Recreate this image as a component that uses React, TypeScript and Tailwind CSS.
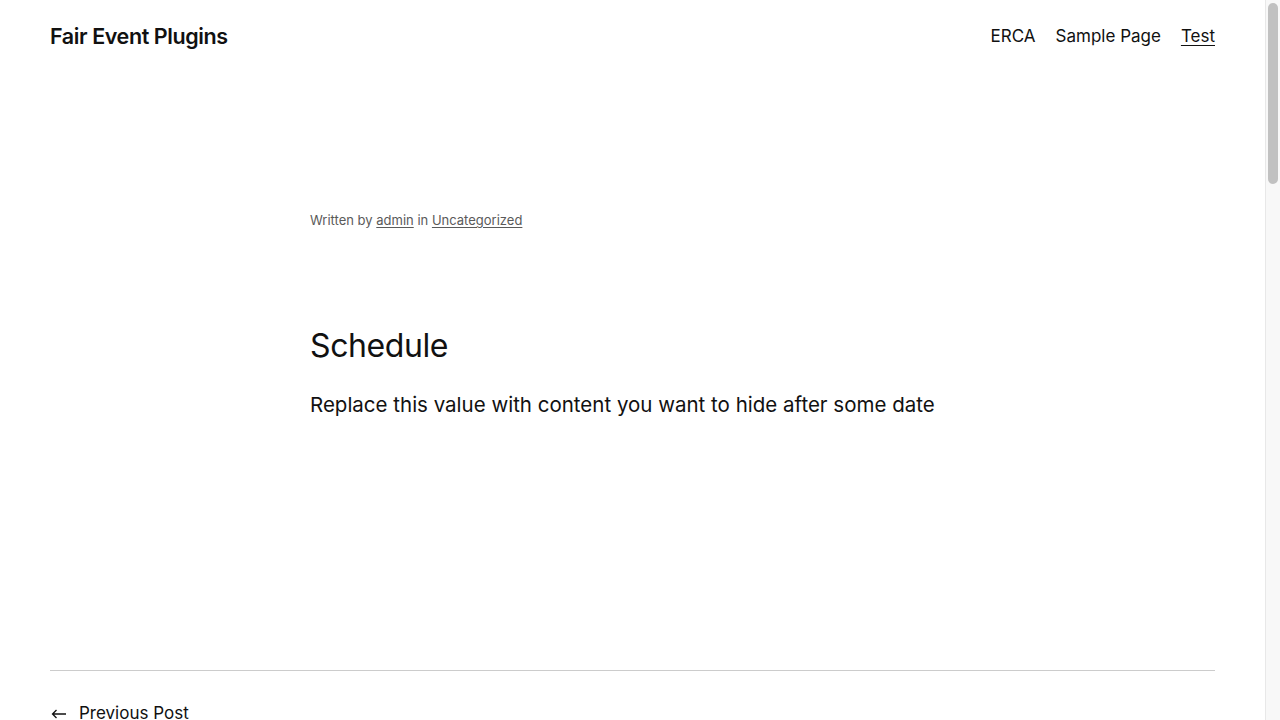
import React from 'react';

const font = { fontFamily: 'Inter, "Noto Sans", sans-serif' };

const ScrollBar = () => (
    <div className="w-[15px] shrink-0 border-l border-[#e8e8e8] bg-[#f8f8f8] px-[2px] pt-[3px]">
        <div className="h-[181px] rounded-full bg-[#c1c1c1]" />
    </div>
);

const App = () => {
    return (
        <div className="flex h-[720px] overflow-hidden bg-white text-[#111111]" style={font}>
            <div className="flex-1">
                <header className="flex items-center justify-between px-[50px] pt-[22px]">
                    <a href="#" className="text-[21.5px] font-semibold tracking-[-0.4px] leading-[26px]">
                        Fair Event Plugins
                    </a>
                    <nav className="flex items-center gap-[20px] text-[17px] leading-[28px]">
                        <a href="#">ERCA</a>
                        <a href="#">Sample Page</a>
                        <a href="#" className="underline underline-offset-[3px]">Test</a>
                    </nav>
                </header>

                <main className="mx-auto w-[645px] pt-[160px]">
                    <div className="text-[13px] leading-[20px] text-[#5a5a5a]">
                        Written by <a href="#" className="underline underline-offset-2">admin</a> in{' '}
                        <a href="#" className="underline underline-offset-2">Uncategorized</a>
                    </div>

                    <h2 className="mt-[94px] text-[32px] font-normal leading-[44px] tracking-[-0.4px]">Schedule</h2>
                    <p className="mt-[22px] text-[20.5px] leading-[30px]">
                        Replace this value with content you want to hide after some date
                    </p>
                </main>

                <section className="mx-[50px] mt-[250px] border-t border-[#cccccc] pt-[30px]">
                    <a href="#" className="flex items-center gap-[12px] text-[17px] leading-[24px]">
                        <svg width="16" height="10" viewBox="0 0 16 10" fill="none" stroke="#111111" strokeWidth="1.3" className="ml-[1px] mt-[2px]">
                            <path d="M15 5H1.5M5.5 1L1.5 5l4 4" />
                        </svg>
                        <span>Previous Post</span>
                    </a>
                </section>
            </div>
            <ScrollBar />
        </div>
    );
};

export default App;
